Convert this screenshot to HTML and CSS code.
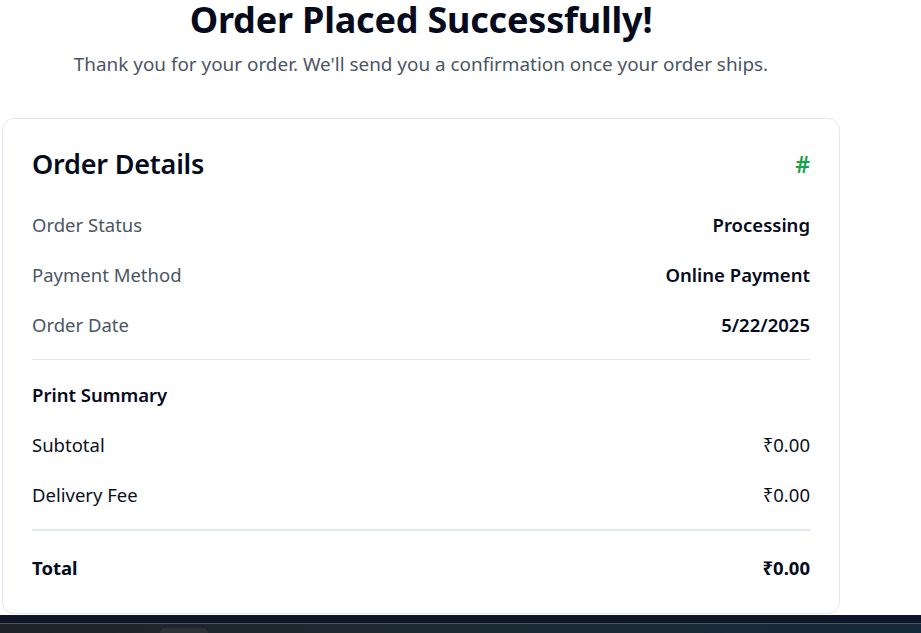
FILE: index.html
```html
<!DOCTYPE html>
<html lang="en">
<head>
<meta charset="utf-8">
<title>Order Placed Successfully</title>
<link rel="stylesheet" href="styles.css">
</head>
<body>
<div class="screen">
  <main class="page">
    <header class="hero">
      <h1 class="hero-title">Order Placed Successfully!</h1>
      <p class="hero-sub">Thank you for your order. We'll send you a confirmation once your order ships.</p>
    </header>
    <section class="card">
      <div class="card-head">
        <h2 class="card-title">Order Details</h2>
        <span class="order-id">#</span>
      </div>
      <div class="rows">
        <div class="row"><span class="label">Order Status</span><span class="value">Processing</span></div>
        <div class="row"><span class="label">Payment Method</span><span class="value">Online Payment</span></div>
        <div class="row"><span class="label">Order Date</span><span class="value">5/22/2025</span></div>
      </div>
      <hr class="divider">
      <div class="rows">
        <div class="row"><span class="section-title">Print Summary</span></div>
        <div class="row"><span class="plain">Subtotal</span><span class="plain">₹0.00</span></div>
        <div class="row"><span class="plain">Delivery Fee</span><span class="plain">₹0.00</span></div>
      </div>
      <hr class="divider thick">
      <div class="row total"><span>Total</span><span>₹0.00</span></div>
    </section>
  </main>
  <div class="taskbar-top"></div>
  <div class="taskbar">
    <div class="task-btn"></div>
  </div>
</div>
</body>
</html>
```

FILE: styles.css
```css
* { box-sizing: border-box; }
html, body { margin: 0; padding: 0; background: #ffffff; }
body {
  font-family: "Noto Sans", "Open Sans", sans-serif;
  color: #0b1120;
  width: 921px;
  height: 633px;
  overflow: hidden;
}
.screen { display: flex; flex-direction: column; height: 633px; }
.page {
  width: 838px;
  margin-left: 2px;
  height: 615px;
}
.hero { text-align: center; padding-top: 2px; }
.hero-title {
  margin: 0;
  font-size: 36px;
  line-height: 36px;
  font-weight: 700;
  color: #050a1c;
  letter-spacing: -0.2px;
}
.hero-sub {
  margin: 12px 0 0;
  font-size: 18.9px;
  line-height: 28px;
  color: #4b5563;
}
.card {
  margin-top: 40px;
  border: 1px solid #e2e8f0;
  border-radius: 12px;
  padding: 25px 29px 31px 29px;
  background: #fff;
}
.card-head {
  display: flex;
  justify-content: space-between;
  align-items: center;
  height: 40px;
}
.card-title {
  margin: 0;
  font-size: 27px;
  line-height: 40px;
  font-weight: 600;
  color: #050a1c;
  letter-spacing: -0.2px;
}
.order-id {
  color: #16a34a;
  font-size: 23px;
  font-weight: 600;
  line-height: 40px;
}
.rows { display: flex; flex-direction: column; gap: 22px; }
.card-head + .rows { margin-top: 27px; }
.row {
  display: flex;
  justify-content: space-between;
  align-items: center;
  height: 28px;
  font-size: 18.5px;
  line-height: 28px;
}
.label { color: #4b5563; }
.value { font-weight: 600; color: #050a1c; }
.plain { color: #0b1120; }
.section-title { font-weight: 600; color: #050a1c; }
.divider {
  border: 0;
  height: 1px;
  background: #e5e7eb;
  margin: 20px 0 21px;
}
.divider.thick { height: 2px; background: #e2e8f0; margin: 20px 0 23px; }
.total { font-weight: 700; color: #050a1c; }
.taskbar-top { height: 8px; background: #0e1526; }
.taskbar {
  flex: 1;
  border-top: 1px solid #4a525c;
  background: linear-gradient(90deg, #1f2328 0%, #1d2a33 50%, #15293a 100%);
  position: relative;
}
.task-btn {
  position: absolute;
  left: 160px;
  top: 4px;
  width: 48px;
  height: 10px;
  border-radius: 5px 5px 0 0;
  background: #2e3237;
}
```
